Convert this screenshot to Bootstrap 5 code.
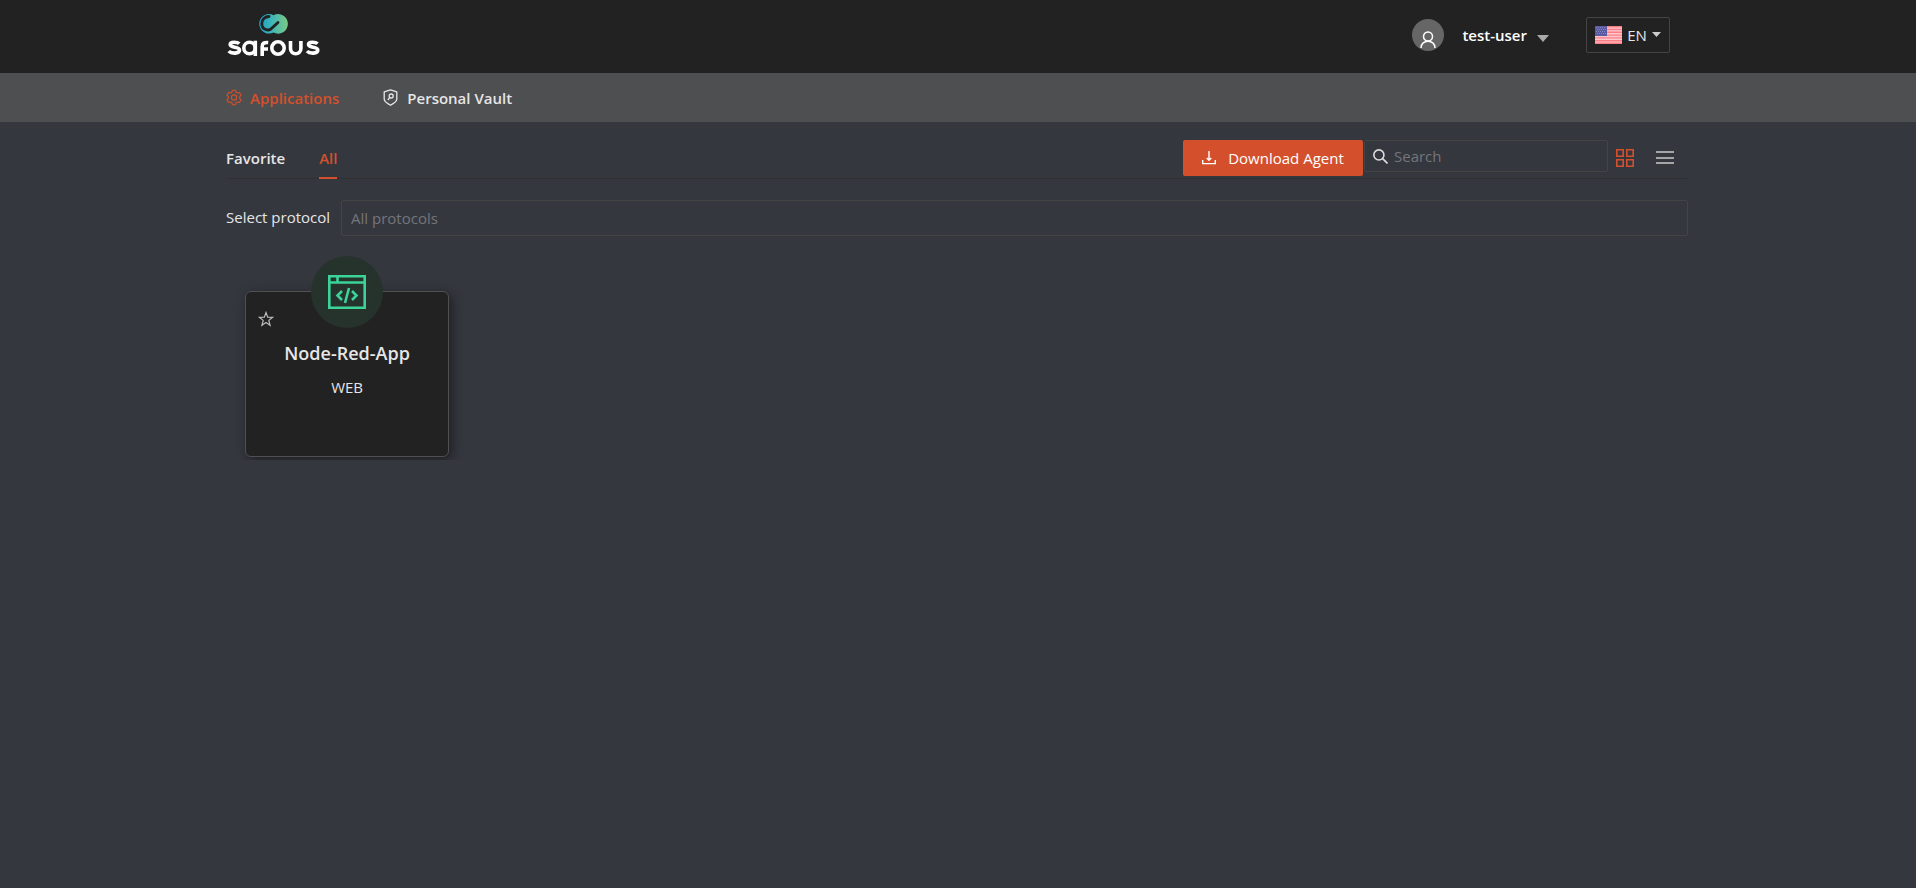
<!DOCTYPE html>
<html lang="en">
<head>
<meta charset="utf-8">
<meta name="viewport" content="width=device-width, initial-scale=1">
<title>Safous – Applications</title>
<link href="https://cdn.jsdelivr.net/npm/bootstrap@5.3.0/dist/css/bootstrap.min.css" rel="stylesheet">
<style>
  :root { --ink: #222; --accent: #d4502c; --line: #444; --text: #e6e6e6; }
  body { background: #35373f; color: var(--text); font-family: "Open Sans", "Noto Sans", sans-serif; font-size: 15px; line-height: 24px; }
  .page-wrap { width: 76.3%; margin-left: 11.8%; }
  a { color: inherit; text-decoration: none; }
  .btn { color: inherit; font-size: inherit; line-height: inherit; }
  svg { display: block; flex: none; }
  .semi { font-weight: 600; }
  .top-bar { background: var(--ink); height: 73px; }
  .top-tools { padding-top: 8px; }
  .menu-bar { background: #4e4f51; height: 49px; }
  .menu-bar .page-wrap { gap: 43px; }
  .accent, .btn.accent { color: var(--accent); }
  .avatar { width: 32px; height: 32px; background: #666; }
  .user-btn { color: #fff; gap: 18px; margin-right: 35px; }
  .user-btn svg { margin-top: 2px; }
  .btn.lang-btn { width: 84px; height: 36px; border: 1px solid var(--line); border-radius: 2px; margin-right: 18px; gap: 5px; }
  .tool-bar { height: 57px; border-bottom: 1px solid #303030; padding-top: 18px; }
  .tab-list { gap: 34px; }
  .tab-list a { height: 39px; padding-top: 6px; }
  .tab-list a.active { border-bottom: 2px solid var(--accent); color: var(--accent); }
  .agent-btn { width: 180px; height: 36px; background: var(--accent); color: #fff; border-radius: 2px; gap: 12px; }
  .agent-btn:hover { background: #b94424; }
  .search-box { width: 244px; height: 32px; border: 1px solid var(--line); border-radius: 2px; margin-left: 1px; padding-left: 8px; gap: 6px; }
  .list-btn { margin: 0 14px 0 22px; }
  input { background: transparent; color: var(--text); border: 0; outline: 0; padding: 0; min-width: 0; }
  input::placeholder { color: #747579; opacity: 1; }
  .protocol-row { margin-top: 21px; gap: 11px; }
  .protocol-row label { padding-bottom: 2px; }
  .protocol-row input { height: 36px; border: 1px solid var(--line); border-radius: 2px; padding: 0 9px; }
  .app-list { padding: 20px 19px 3px; overflow: hidden; }
  .app-tile { width: 204px; margin-top: 35px; height: 166px; background: var(--ink); border: 1px solid #505050; border-radius: 6px; box-shadow: 3px 3px 12px rgba(0,0,0,.45); }
  .app-icon { width: 72px; height: 72px; background: #26332d; top: -36px; left: 50%; margin-left: -36px; }
  .star-btn { top: 19px; left: 12px; }
  .app-tile h2 { font-size: 18px; line-height: 24px; margin: 49px 0 10px; }
</style>
<script src="https://cdn.jsdelivr.net/npm/bootstrap@5.3.0/dist/js/bootstrap.bundle.min.js"></script>
</head>
<body>
<header class="top-bar">
  <div class="page-wrap d-flex justify-content-between">
    <a href="#" aria-label="Safous home" class="pt-2">
      <svg width="96" height="54" viewBox="0 0 96 54">
        <defs><linearGradient id="brand" x1="0" x2="1"><stop offset="0" stop-color="#1f9ec4"/><stop offset=".35" stop-color="#35b3bd"/><stop offset="1" stop-color="#7cc984"/></linearGradient></defs>
        <path fill="url(#brand)" d="M43 6a9.800 9.800 0 1 0 4.500 18.500A9.800 9.800 0 1 0 47.500 7.200A9.800 9.800 0 0 0 43 6Z"/>
        <path fill="none" stroke="#222" stroke-width="2.800" stroke-linecap="round" d="M43 8.500c-4 0-7.200 3-7.200 7.200c0 5.800 6.700 8.300 10.200 4.300l6-5.600"/>
        <g fill="none" stroke="#fff" stroke-width="3.600">
          <path d="M13.200 35.700c-1.500-1.600-9-2.500-9 .9c0 3.600 9.300 1.500 9.300 5.500c0 4-8.300 3.700-10.800 1"/>
          <circle cx="23.500" cy="40" r="5.700"/><path d="M29.300 32.700V48"/>
          <path d="M36.200 48V38.500c0-3.300 2-4.300 6-4M36 41h6"/>
          <circle cx="52" cy="40" r="6.200"/>
          <path d="M64.500 33v7.500c0 7 10.400 7 10.400 0V33"/>
          <path d="M91.500 35.700c-1.500-1.600-9-2.500-9 .9c0 3.600 9.300 1.500 9.300 5.500c0 4-8.300 3.700-10.800 1"/>
        </g>
      </svg>
    </a>
    <div class="top-tools d-flex align-items-center">
      <button type="button" class="user-btn btn p-0 border-0 d-flex align-items-center semi">
        <span class="avatar rounded-circle d-flex justify-content-center align-items-end">
          <svg width="16" height="20" viewBox="0 0 16 20" fill="none" stroke="#fff" stroke-width="1.500"><circle cx="8" cy="5.500" r="4.500"/><path d="M1 17c0-9 14-9 14 0"/></svg>
        </span>
        <span class="d-flex align-items-center gap-2">test-user
          <svg width="16" height="16" viewBox="0 0 16 16"><path fill="#aaa" d="M2 7h12l-6 7z"/></svg>
        </span>
      </button>
      <button type="button" class="lang-btn btn p-0 d-flex align-items-center justify-content-center">
        <svg width="27" height="18" viewBox="0 0 27 18"><path fill="#ffc9cc" d="M0 0h27v18H0z"/><path stroke="#fb7d86" stroke-width="1.400" d="M0 .7h27M0 3.500h27M0 6.300h27M0 9.100h27M0 11.900h27M0 14.700h27M0 17.300h27"/><path fill="#5a5aa3" d="M0 0h12v10H0z"/><path stroke="#8585bd" stroke-dasharray="1 1" d="M1 1.500h10M2 3.500h10M1 5.500h10M2 7.500h10"/></svg>
        EN
        <svg width="9" height="8" viewBox="0 0 9 8"><path fill="#ccc" d="M0 1h9L4.500 6z"/></svg>
      </button>
    </div>
  </div>
</header>
<nav class="menu-bar d-flex" aria-label="Main">
  <div class="page-wrap d-flex align-items-center semi">
    <a href="#" class="accent d-flex align-items-center gap-2">
      <svg width="16" height="17" viewBox="0 0 17 17" fill="none" stroke="currentColor"><path stroke-linejoin="round" stroke-width="1.200" d="M6.800.8h3.400l.5 2.100 1.500.9 2.100-.7 1.700 3L14.500 7.600v1.800l1.500 1.500-1.700 3-2.100-.7-1.500.9-.5 2.100H6.800l-.5-2.100-1.500-.9-2.100.7-1.700-3 1.500-1.500V7.600L1 6.100l1.700-3 2.100.7 1.500-.9z"/><circle cx="8.500" cy="8.500" r="2.800" stroke-width="1.200"/></svg>
      <span>Applications</span></a>
    <a href="#" class="d-flex align-items-center gap-2">
      <svg width="17" height="17" viewBox="0 0 17 17" fill="none" stroke="currentColor" stroke-width="1.300"><path stroke-linejoin="round" d="M8.500.8l6.300 2V10c0 3-3 4.500-6.300 6.200C5.200 14.500 2.200 13 2.200 10V2.800z"/><circle cx="9.200" cy="7" r="2"/><path d="M7.800 8.500L5.800 11"/></svg>
      <span>Personal Vault</span></a>
  </div>
</nav>
<main class="page-wrap">
  <div class="tool-bar d-flex justify-content-between align-items-start">
    <div class="tab-list d-flex semi"><a href="#">Favorite</a><a href="#" class="active" aria-current="page">All</a></div>
    <div class="d-flex align-items-start">
      <button type="button" class="agent-btn btn p-0 border-0 d-flex align-items-center justify-content-center">
        <svg width="14" height="14" viewBox="0 0 14 14" fill="none" stroke="#fff" stroke-width="1.400"><path d="M.7 9v3.600h12.600V9M7 0v9M4.700 7L7 9.300 9.300 7"/></svg>
        Download Agent</button>
      <label class="search-box d-flex align-items-center">
        <svg width="15" height="15" viewBox="0 0 14 14" fill="none" stroke="#ddd" stroke-width="1.500"><circle cx="5.500" cy="5.500" r="4.700"/><path d="M9 9l4.500 4.500"/></svg>
        <input type="search" placeholder="Search" aria-label="Search">
      </label>
      <button type="button" aria-label="Grid view" class="btn p-0 border-0 accent ms-2 mt-2"><svg width="18" height="20" viewBox="0 0 18 20" fill="none" stroke="currentColor" stroke-width="1.600"><path d="M.8 1.800h6.400v6.400H.8zM10.800 1.800h6.400v6.400h-6.400zM.8 11.800h6.400v6.400H.8zM10.800 11.800h6.400v6.400h-6.400z"/></svg></button>
      <button type="button" aria-label="List view" class="list-btn btn p-0 border-0 mt-2"><svg width="18" height="20" viewBox="0 0 18 20" stroke="#a5a5a5" stroke-width="2"><path d="M0 4h18M0 10h18M0 15h18"/></svg></button>
    </div>
  </div>
  <div class="protocol-row d-flex align-items-center">
    <label for="protocol">Select protocol</label>
    <input id="protocol" class="flex-grow-1" placeholder="All protocols">
  </div>
  <section class="app-list">
    <article class="app-tile position-relative text-center">
      <div class="app-icon position-absolute rounded-circle d-flex align-items-center justify-content-center">
        <svg width="38" height="34" viewBox="0 0 38 34" fill="none" stroke="#3bd397" stroke-width="2.600"><path d="M1.300 1.300h35.400v31.400H1.300zM1 7.500h36M9.500 1v6.500M14 16l-4.500 4.500L14 25M24 16l4.500 4.500L24 25M21 13l-4 15"/></svg>
      </div>
      <button type="button" aria-label="Add to favorites" class="star-btn btn p-0 border-0 position-absolute"><svg width="16" height="16" viewBox="0 0 16 16" fill="none" stroke="#bbb" stroke-width="1.200"><path d="M8 1.500l1.700 4.600 5 .2-3.900 3.100 1.300 4.900L8 11.500l-4.100 2.800 1.300-4.900L1.300 6.300l5-.2z"/></svg></button>
      <h2 class="semi">Node-Red-App</h2>
      <div>WEB</div>
    </article>
  </section>
</main>
</body>
</html>
